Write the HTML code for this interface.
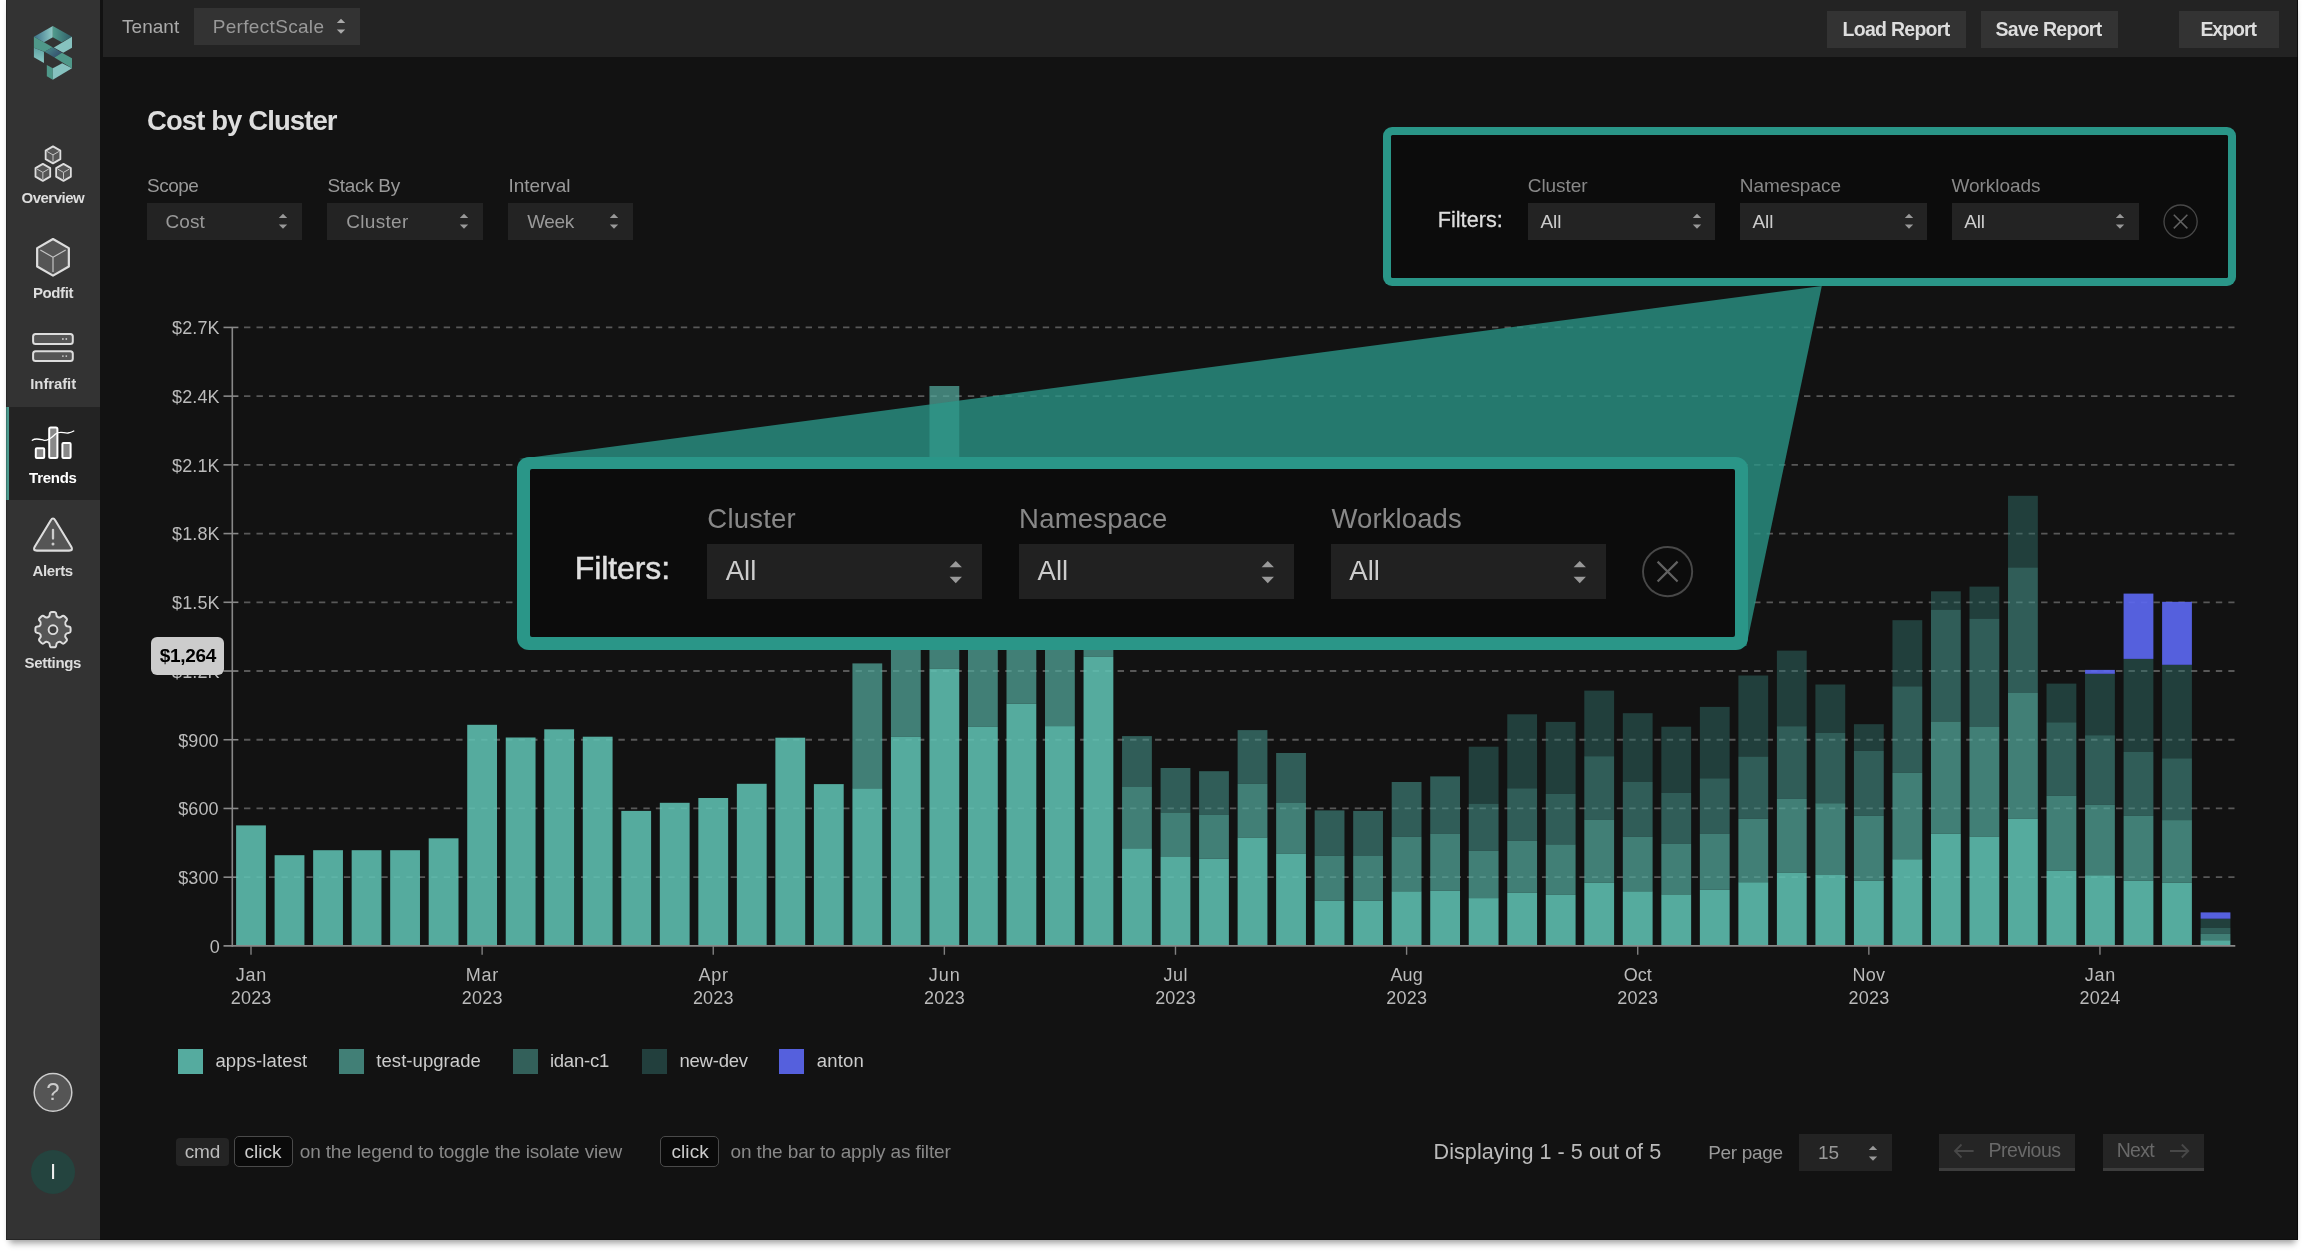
<!DOCTYPE html>
<html lang="en"><head><meta charset="utf-8"><title>Cost by Cluster</title>
<style>
html,body{margin:0;padding:0;background:#fff;}
body{width:2304px;height:1253px;position:relative;overflow:hidden;font-family:"Liberation Sans",sans-serif;}
.b{position:absolute;display:block;}
.t{position:absolute;white-space:pre;line-height:1;display:block;}
</style></head><body>
<div id="app" style="position:absolute;left:0;top:0;width:2304px;height:1253px;will-change:transform">
<div class="b" style="left:6px;top:0;width:2292px;height:1240px;background:#121212;box-shadow:0 7.5px 6px -3.5px rgba(0,0,0,.30),0 1px 5px rgba(0,0,0,.08);"></div>
<div class="b" style="left:6.00px;top:0.00px;width:94.00px;height:1240.00px;background:#333333;"></div>
<div class="b" style="left:103.00px;top:0.00px;width:2195.00px;height:57.40px;background:#232323;"></div>
<div class="b" style="left:6.00px;top:407.00px;width:94.00px;height:93.00px;background:#232323;"></div>
<div class="b" style="left:6.00px;top:407.00px;width:3.40px;height:93.00px;background:#4c998d;"></div>
<div class="b" style="left:6px;top:0;width:2292px;height:1240px;box-sizing:border-box;border-left:1.6px solid rgba(0,0,0,.22);border-right:1.5px solid rgba(0,0,0,.6);border-bottom:1.5px solid rgba(0,0,0,.28);pointer-events:none"></div>
<svg class="b" style="left:20px;top:15px" width="70" height="75" viewBox="0 0 1169 1253">
<defs>
<linearGradient id="lg1" x1="0" y1="0" x2="1" y2="0"><stop offset="0" stop-color="#3a6f86"/><stop offset="1" stop-color="#8fcbc6"/></linearGradient>
<linearGradient id="lg2" x1="0" y1="0" x2="1" y2="0"><stop offset="0" stop-color="#519c8d"/><stop offset="1" stop-color="#2e5c68"/></linearGradient>
<linearGradient id="lg3" x1="0" y1="0" x2="1" y2="0.6"><stop offset="0" stop-color="#4a8f8a"/><stop offset="1" stop-color="#35506f"/></linearGradient>
<linearGradient id="lg4" x1="0" y1="0" x2="0" y2="1"><stop offset="0" stop-color="#5fa3a3"/><stop offset="1" stop-color="#8cc9c5"/></linearGradient>
</defs>
<polygon points="232,365 548,185 548,370 400,457" fill="url(#lg1)"/>
<polygon points="548,185 868,365 695,455 548,370" fill="url(#lg2)"/>
<polygon points="868,365 868,548 722,632 565,543" fill="#86c2bf"/>
<polygon points="232,365 400,457 545,540 410,612 232,548" fill="#4f9889"/>
<polygon points="545,540 700,630 575,710 410,612" fill="url(#lg3)"/>
<polygon points="700,630 868,722 868,888 575,710" fill="#4f9889"/>
<polygon points="232,548 400,612 400,800 232,705" fill="url(#lg4)"/>
<polygon points="448,835 548,888 548,1082 448,1025" fill="#4f9889"/>
<polygon points="548,888 705,805 868,890 548,1082" fill="#86c2bf"/>
</svg>
<svg class="b" style="left:6px;top:130px" width="94" height="1110" viewBox="6 130 94 1110"><polygon points="53.00,146.40 60.36,150.65 60.36,159.15 53.00,163.40 45.64,159.15 45.64,150.65" fill="#555" stroke="#ddd" stroke-width="1.8" stroke-linejoin="round"/><path d="M53.00 154.90L53.00 161.70M53.00 154.90L58.89 151.50M53.00 154.90L47.11 151.50" stroke="#c4c4c4" stroke-width="1.0" fill="none"/><polygon points="42.85,163.90 50.21,168.15 50.21,176.65 42.85,180.90 35.49,176.65 35.49,168.15" fill="#555" stroke="#ddd" stroke-width="1.8" stroke-linejoin="round"/><path d="M42.85 172.40L42.85 179.20M42.85 172.40L48.74 169.00M42.85 172.40L36.96 169.00" stroke="#c4c4c4" stroke-width="1.0" fill="none"/><polygon points="63.50,163.90 70.86,168.15 70.86,176.65 63.50,180.90 56.14,176.65 56.14,168.15" fill="#555" stroke="#ddd" stroke-width="1.8" stroke-linejoin="round"/><path d="M63.50 172.40L63.50 179.20M63.50 172.40L69.39 169.00M63.50 172.40L57.61 169.00" stroke="#c4c4c4" stroke-width="1.0" fill="none"/><polygon points="53.00,239.00 68.85,248.15 68.85,266.45 53.00,275.60 37.15,266.45 37.15,248.15" fill="#555" stroke="#ddd" stroke-width="2.2" stroke-linejoin="round"/><path d="M53.00 257.30L53.00 271.94M53.00 257.30L65.68 249.98M53.00 257.30L40.32 249.98" stroke="#c4c4c4" stroke-width="1.2" fill="none"/><rect x="33.1" y="334.1" width="39.7" height="9.8" rx="2.5" fill="#555" stroke="#ddd" stroke-width="2"/><circle cx="62.9" cy="339.0" r="0.9" fill="#ccc"/><circle cx="66.3" cy="339.0" r="0.9" fill="#ccc"/><rect x="33.1" y="351.2" width="39.7" height="9.8" rx="2.5" fill="#555" stroke="#ddd" stroke-width="2"/><circle cx="62.9" cy="356.09999999999997" r="0.9" fill="#ccc"/><circle cx="66.3" cy="356.09999999999997" r="0.9" fill="#ccc"/><rect x="35.8" y="448.3" width="8.4" height="9.6" rx="1" fill="#888" stroke="#fff" stroke-width="2"/><rect x="49.2" y="427.5" width="8.2" height="30.4" rx="1.5" fill="#888" stroke="#fff" stroke-width="2"/><rect x="62.4" y="443" width="8.2" height="14.9" rx="1" fill="#888" stroke="#fff" stroke-width="2"/><path d="M32.3 440.3C36 437.5 40 439.5 44 440.3C49 441 52 437 55.5 434C60 430.5 64 433.5 68 433C70.5 432.7 72.5 431.8 73.8 431" stroke="#fff" stroke-width="1.3" fill="none" stroke-linecap="round"/><path d="M50.67 520.45Q53.00 516.60 55.33 520.45L71.27 546.75Q73.60 550.60 69.10 550.60L36.90 550.60Q32.40 550.60 34.73 546.75Z" fill="#555" stroke="#ddd" stroke-width="2.1" stroke-linejoin="round"/><path d="M53 529.8L53 538.6" stroke="#ccc" stroke-width="2.3" stroke-linecap="round"/><circle cx="53" cy="543.9" r="1.5" fill="#ccc"/><path d="M47.86 617.29Q49.83 616.48 49.78 614.29L49.78 614.29Q49.74 612.10 51.94 612.10L54.06 612.10Q56.26 612.10 56.22 614.29L56.22 614.29Q56.17 616.48 58.14 617.29L58.14 617.29Q60.11 618.10 61.62 616.53L61.62 616.53Q63.14 614.95 64.69 616.50L66.20 618.01Q67.75 619.56 66.17 621.08L66.17 621.08Q64.60 622.59 65.41 624.56L65.41 624.56Q66.22 626.53 68.41 626.48L68.41 626.48Q70.60 626.44 70.60 628.64L70.60 630.76Q70.60 632.96 68.41 632.92L68.41 632.92Q66.22 632.87 65.41 634.84L65.41 634.84Q64.60 636.81 66.17 638.32L66.17 638.32Q67.75 639.84 66.20 641.39L64.69 642.90Q63.14 644.45 61.62 642.87L61.62 642.87Q60.11 641.30 58.14 642.11L58.14 642.11Q56.17 642.92 56.22 645.11L56.22 645.11Q56.26 647.30 54.06 647.30L51.94 647.30Q49.74 647.30 49.78 645.11L49.78 645.11Q49.83 642.92 47.86 642.11L47.86 642.11Q45.89 641.30 44.38 642.87L44.38 642.87Q42.86 644.45 41.31 642.90L39.80 641.39Q38.25 639.84 39.83 638.32L39.83 638.32Q41.40 636.81 40.59 634.84L40.59 634.84Q39.78 632.87 37.59 632.92L37.59 632.92Q35.40 632.96 35.40 630.76L35.40 628.64Q35.40 626.44 37.59 626.48L37.59 626.48Q39.78 626.53 40.59 624.56L40.59 624.56Q41.40 622.59 39.83 621.08L39.83 621.08Q38.25 619.56 39.80 618.01L41.31 616.50Q42.86 614.95 44.38 616.53L44.38 616.53Q45.89 618.10 47.86 617.29Z" fill="#555" stroke="#ddd" stroke-width="2" stroke-linejoin="round"/><circle cx="53" cy="629.7" r="4.4" fill="#3c3c3c" stroke="#ddd" stroke-width="1.9"/><circle cx="53" cy="1092.4" r="18.8" fill="#555" stroke="#ccc" stroke-width="1.5"/><circle cx="53" cy="1172" r="22" fill="#24443f"/></svg>
<span class="t" style="left:21.50px;top:190.30px;font-size:15px;color:#ddd;font-weight:700;letter-spacing:-0.507px;">Overview</span>
<span class="t" style="left:32.90px;top:285.40px;font-size:15px;color:#ddd;font-weight:700;letter-spacing:-0.380px;">Podfit</span>
<span class="t" style="left:30.30px;top:376.20px;font-size:15px;color:#ddd;font-weight:700;letter-spacing:-0.118px;">Infrafit</span>
<span class="t" style="left:29.10px;top:469.50px;font-size:15px;color:#fff;font-weight:700;letter-spacing:-0.265px;">Trends</span>
<span class="t" style="left:32.60px;top:562.70px;font-size:15px;color:#ddd;font-weight:700;letter-spacing:-0.380px;">Alerts</span>
<span class="t" style="left:24.50px;top:655.30px;font-size:15px;color:#ddd;font-weight:700;letter-spacing:-0.318px;">Settings</span>
<span class="t" style="left:46.31px;top:1080.48px;font-size:24px;color:#ccc;letter-spacing:0.000px;">?</span>
<span class="t" style="left:49.94px;top:1161.38px;font-size:22px;color:#eee;letter-spacing:0.000px;">I</span>
<span class="t" style="left:122.00px;top:16.52px;font-size:19px;color:#aaa;letter-spacing:0.040px;">Tenant</span>
<div class="b" style="left:193.90px;top:7.80px;width:166.00px;height:37.00px;background:#333333;"></div>
<span class="t" style="left:212.70px;top:16.52px;font-size:19px;color:#999;letter-spacing:0.323px;">PerfectScale</span>
<svg class="b" style="left:332.50px;top:16.30px" width="16.00" height="20.00" viewBox="332.50 16.30 16.00 20.00"><path d="M336.30 23.30L344.70 23.30L340.50 19.00Z M336.30 29.80L344.70 29.80L340.50 34.10Z" fill="#aaa"/></svg>
<div class="b" style="left:1826.90px;top:11.00px;width:139.40px;height:37.20px;background:#333333;"></div>
<span class="t" style="left:1842.50px;top:19.79px;font-size:19.5px;color:#ddd;font-weight:700;letter-spacing:-0.717px;">Load Report</span>
<div class="b" style="left:1980.50px;top:11.00px;width:137.70px;height:37.20px;background:#333333;"></div>
<span class="t" style="left:1995.50px;top:19.79px;font-size:19.5px;color:#ddd;font-weight:700;letter-spacing:-0.705px;">Save Report</span>
<div class="b" style="left:2179.00px;top:11.00px;width:99.60px;height:37.20px;background:#333333;"></div>
<span class="t" style="left:2200.40px;top:19.79px;font-size:19.5px;color:#ddd;font-weight:700;letter-spacing:-1.030px;">Export</span>
<span class="t" style="left:147.00px;top:107.02px;font-size:27.5px;color:#ddd;font-weight:700;letter-spacing:-0.904px;">Cost by Cluster</span>
<span class="t" style="left:147.00px;top:176.22px;font-size:19px;color:#999;letter-spacing:-0.519px;">Scope</span>
<div class="b" style="left:147.00px;top:202.70px;width:155.30px;height:37.10px;background:#232323;"></div>
<span class="t" style="left:165.40px;top:211.52px;font-size:19px;color:#999;letter-spacing:0.125px;">Cost</span>
<svg class="b" style="left:275.10px;top:211.25px" width="16.00" height="20.00" viewBox="275.10 211.25 16.00 20.00"><path d="M278.90 218.25L287.30 218.25L283.10 213.95Z M278.90 224.75L287.30 224.75L283.10 229.05Z" fill="#999"/></svg>
<span class="t" style="left:327.40px;top:176.22px;font-size:19px;color:#999;letter-spacing:-0.314px;">Stack By</span>
<div class="b" style="left:327.40px;top:202.70px;width:155.40px;height:37.10px;background:#232323;"></div>
<span class="t" style="left:346.30px;top:211.52px;font-size:19px;color:#999;letter-spacing:0.296px;">Cluster</span>
<svg class="b" style="left:455.50px;top:211.25px" width="16.00" height="20.00" viewBox="455.50 211.25 16.00 20.00"><path d="M459.30 218.25L467.70 218.25L463.50 213.95Z M459.30 224.75L467.70 224.75L463.50 229.05Z" fill="#999"/></svg>
<span class="t" style="left:508.60px;top:176.22px;font-size:19px;color:#999;letter-spacing:-0.064px;">Interval</span>
<div class="b" style="left:508.10px;top:202.70px;width:124.90px;height:37.10px;background:#232323;"></div>
<span class="t" style="left:527.20px;top:211.52px;font-size:19px;color:#999;letter-spacing:-0.425px;">Week</span>
<svg class="b" style="left:605.50px;top:211.25px" width="16.00" height="20.00" viewBox="605.50 211.25 16.00 20.00"><path d="M609.30 218.25L617.70 218.25L613.50 213.95Z M609.30 224.75L617.70 224.75L613.50 229.05Z" fill="#999"/></svg>
<svg class="b" style="left:0;top:0" width="2304" height="1253" viewBox="0 0 2304 1253"><line x1="223.5" y1="877.18" x2="238.4" y2="877.18" stroke="#888" stroke-width="1.6"/><line x1="244" y1="877.18" x2="2234.5" y2="877.18" stroke="#585858" stroke-width="1.8" stroke-dasharray="6.4 6.08"/><line x1="223.5" y1="808.46" x2="238.4" y2="808.46" stroke="#888" stroke-width="1.6"/><line x1="244" y1="808.46" x2="2234.5" y2="808.46" stroke="#585858" stroke-width="1.8" stroke-dasharray="6.4 6.08"/><line x1="223.5" y1="739.74" x2="238.4" y2="739.74" stroke="#888" stroke-width="1.6"/><line x1="244" y1="739.74" x2="2234.5" y2="739.74" stroke="#585858" stroke-width="1.8" stroke-dasharray="6.4 6.08"/><line x1="223.5" y1="671.02" x2="238.4" y2="671.02" stroke="#888" stroke-width="1.6"/><line x1="244" y1="671.02" x2="2234.5" y2="671.02" stroke="#585858" stroke-width="1.8" stroke-dasharray="6.4 6.08"/><line x1="223.5" y1="602.30" x2="238.4" y2="602.30" stroke="#888" stroke-width="1.6"/><line x1="244" y1="602.30" x2="2234.5" y2="602.30" stroke="#585858" stroke-width="1.8" stroke-dasharray="6.4 6.08"/><line x1="223.5" y1="533.58" x2="238.4" y2="533.58" stroke="#888" stroke-width="1.6"/><line x1="244" y1="533.58" x2="2234.5" y2="533.58" stroke="#585858" stroke-width="1.8" stroke-dasharray="6.4 6.08"/><line x1="223.5" y1="464.86" x2="238.4" y2="464.86" stroke="#888" stroke-width="1.6"/><line x1="244" y1="464.86" x2="2234.5" y2="464.86" stroke="#585858" stroke-width="1.8" stroke-dasharray="6.4 6.08"/><line x1="223.5" y1="396.14" x2="238.4" y2="396.14" stroke="#888" stroke-width="1.6"/><line x1="244" y1="396.14" x2="2234.5" y2="396.14" stroke="#585858" stroke-width="1.8" stroke-dasharray="6.4 6.08"/><line x1="223.5" y1="327.42" x2="238.4" y2="327.42" stroke="#888" stroke-width="1.6"/><line x1="244" y1="327.42" x2="2234.5" y2="327.42" stroke="#585858" stroke-width="1.8" stroke-dasharray="6.4 6.08"/><g><rect x="236.10" y="825.40" width="29.8" height="120.50" fill="#5ec0b2" fill-opacity="0.88"/><rect x="274.62" y="855.20" width="29.8" height="90.70" fill="#5ec0b2" fill-opacity="0.88"/><rect x="313.14" y="850.20" width="29.8" height="95.70" fill="#5ec0b2" fill-opacity="0.88"/><rect x="351.66" y="850.20" width="29.8" height="95.70" fill="#5ec0b2" fill-opacity="0.88"/><rect x="390.18" y="850.20" width="29.8" height="95.70" fill="#5ec0b2" fill-opacity="0.88"/><rect x="428.70" y="838.30" width="29.8" height="107.60" fill="#5ec0b2" fill-opacity="0.88"/><rect x="467.22" y="724.80" width="29.8" height="221.10" fill="#5ec0b2" fill-opacity="0.88"/><rect x="505.74" y="737.50" width="29.8" height="208.40" fill="#5ec0b2" fill-opacity="0.88"/><rect x="544.26" y="729.30" width="29.8" height="216.60" fill="#5ec0b2" fill-opacity="0.88"/><rect x="582.78" y="736.70" width="29.8" height="209.20" fill="#5ec0b2" fill-opacity="0.88"/><rect x="621.30" y="810.90" width="29.8" height="135.00" fill="#5ec0b2" fill-opacity="0.88"/><rect x="659.82" y="802.80" width="29.8" height="143.10" fill="#5ec0b2" fill-opacity="0.88"/><rect x="698.34" y="798.00" width="29.8" height="147.90" fill="#5ec0b2" fill-opacity="0.88"/><rect x="736.86" y="783.80" width="29.8" height="162.10" fill="#5ec0b2" fill-opacity="0.88"/><rect x="775.38" y="737.70" width="29.8" height="208.20" fill="#5ec0b2" fill-opacity="0.88"/><rect x="813.90" y="784.10" width="29.8" height="161.80" fill="#5ec0b2" fill-opacity="0.88"/><rect x="852.42" y="788.30" width="29.8" height="157.60" fill="#5ec0b2" fill-opacity="0.88"/><rect x="852.42" y="663.40" width="29.8" height="124.90" fill="#53a99d" fill-opacity="0.72"/><rect x="890.94" y="736.90" width="29.8" height="209.00" fill="#5ec0b2" fill-opacity="0.88"/><rect x="890.94" y="600.00" width="29.8" height="136.90" fill="#53a99d" fill-opacity="0.72"/><rect x="929.46" y="668.50" width="29.8" height="277.40" fill="#5ec0b2" fill-opacity="0.88"/><rect x="929.46" y="386.00" width="29.8" height="282.50" fill="#53a99d" fill-opacity="0.72"/><rect x="967.98" y="726.90" width="29.8" height="219.00" fill="#5ec0b2" fill-opacity="0.88"/><rect x="967.98" y="560.00" width="29.8" height="166.90" fill="#53a99d" fill-opacity="0.72"/><rect x="1006.50" y="703.70" width="29.8" height="242.20" fill="#5ec0b2" fill-opacity="0.88"/><rect x="1006.50" y="580.00" width="29.8" height="123.70" fill="#53a99d" fill-opacity="0.72"/><rect x="1045.02" y="726.10" width="29.8" height="219.80" fill="#5ec0b2" fill-opacity="0.88"/><rect x="1045.02" y="600.00" width="29.8" height="126.10" fill="#53a99d" fill-opacity="0.72"/><rect x="1083.54" y="656.90" width="29.8" height="289.00" fill="#5ec0b2" fill-opacity="0.88"/><rect x="1083.54" y="640.00" width="29.8" height="16.90" fill="#53a99d" fill-opacity="0.72"/><rect x="1122.06" y="848.30" width="29.8" height="97.60" fill="#5ec0b2" fill-opacity="0.88"/><rect x="1122.06" y="787.00" width="29.8" height="61.30" fill="#53a99d" fill-opacity="0.72"/><rect x="1122.06" y="736.10" width="29.8" height="50.90" fill="#46958b" fill-opacity="0.58"/><rect x="1160.58" y="857.00" width="29.8" height="88.90" fill="#5ec0b2" fill-opacity="0.88"/><rect x="1160.58" y="812.50" width="29.8" height="44.50" fill="#53a99d" fill-opacity="0.72"/><rect x="1160.58" y="768.00" width="29.8" height="44.50" fill="#46958b" fill-opacity="0.58"/><rect x="1199.10" y="858.60" width="29.8" height="87.30" fill="#5ec0b2" fill-opacity="0.88"/><rect x="1199.10" y="814.60" width="29.8" height="44.00" fill="#53a99d" fill-opacity="0.72"/><rect x="1199.10" y="771.20" width="29.8" height="43.40" fill="#46958b" fill-opacity="0.58"/><rect x="1237.62" y="837.50" width="29.8" height="108.40" fill="#5ec0b2" fill-opacity="0.88"/><rect x="1237.62" y="783.80" width="29.8" height="53.70" fill="#53a99d" fill-opacity="0.72"/><rect x="1237.62" y="730.10" width="29.8" height="53.70" fill="#46958b" fill-opacity="0.58"/><rect x="1276.14" y="853.90" width="29.8" height="92.00" fill="#5ec0b2" fill-opacity="0.88"/><rect x="1276.14" y="803.00" width="29.8" height="50.90" fill="#53a99d" fill-opacity="0.72"/><rect x="1276.14" y="753.00" width="29.8" height="50.00" fill="#46958b" fill-opacity="0.58"/><rect x="1314.66" y="900.70" width="29.8" height="45.20" fill="#5ec0b2" fill-opacity="0.88"/><rect x="1314.66" y="855.70" width="29.8" height="45.00" fill="#53a99d" fill-opacity="0.72"/><rect x="1314.66" y="810.40" width="29.8" height="45.30" fill="#46958b" fill-opacity="0.58"/><rect x="1353.18" y="900.70" width="29.8" height="45.20" fill="#5ec0b2" fill-opacity="0.88"/><rect x="1353.18" y="856.00" width="29.8" height="44.70" fill="#53a99d" fill-opacity="0.72"/><rect x="1353.18" y="810.90" width="29.8" height="45.10" fill="#46958b" fill-opacity="0.58"/><rect x="1391.70" y="891.30" width="29.8" height="54.60" fill="#5ec0b2" fill-opacity="0.88"/><rect x="1391.70" y="836.70" width="29.8" height="54.60" fill="#53a99d" fill-opacity="0.72"/><rect x="1391.70" y="782.00" width="29.8" height="54.70" fill="#46958b" fill-opacity="0.58"/><rect x="1430.22" y="890.70" width="29.8" height="55.20" fill="#5ec0b2" fill-opacity="0.88"/><rect x="1430.22" y="833.60" width="29.8" height="57.10" fill="#53a99d" fill-opacity="0.72"/><rect x="1430.22" y="776.40" width="29.8" height="57.20" fill="#46958b" fill-opacity="0.58"/><rect x="1468.74" y="898.10" width="29.8" height="47.80" fill="#5ec0b2" fill-opacity="0.88"/><rect x="1468.74" y="850.70" width="29.8" height="47.40" fill="#53a99d" fill-opacity="0.72"/><rect x="1468.74" y="803.60" width="29.8" height="47.10" fill="#46958b" fill-opacity="0.58"/><rect x="1468.74" y="746.70" width="29.8" height="56.90" fill="#32726d" fill-opacity="0.47"/><rect x="1507.26" y="892.80" width="29.8" height="53.10" fill="#5ec0b2" fill-opacity="0.88"/><rect x="1507.26" y="840.70" width="29.8" height="52.10" fill="#53a99d" fill-opacity="0.72"/><rect x="1507.26" y="788.30" width="29.8" height="52.40" fill="#46958b" fill-opacity="0.58"/><rect x="1507.26" y="714.30" width="29.8" height="74.00" fill="#32726d" fill-opacity="0.47"/><rect x="1545.78" y="894.90" width="29.8" height="51.00" fill="#5ec0b2" fill-opacity="0.88"/><rect x="1545.78" y="844.40" width="29.8" height="50.50" fill="#53a99d" fill-opacity="0.72"/><rect x="1545.78" y="793.80" width="29.8" height="50.60" fill="#46958b" fill-opacity="0.58"/><rect x="1545.78" y="721.90" width="29.8" height="71.90" fill="#32726d" fill-opacity="0.47"/><rect x="1584.30" y="882.80" width="29.8" height="63.10" fill="#5ec0b2" fill-opacity="0.88"/><rect x="1584.30" y="819.60" width="29.8" height="63.20" fill="#53a99d" fill-opacity="0.72"/><rect x="1584.30" y="756.20" width="29.8" height="63.40" fill="#46958b" fill-opacity="0.58"/><rect x="1584.30" y="690.60" width="29.8" height="65.60" fill="#32726d" fill-opacity="0.47"/><rect x="1622.82" y="891.30" width="29.8" height="54.60" fill="#5ec0b2" fill-opacity="0.88"/><rect x="1622.82" y="836.70" width="29.8" height="54.60" fill="#53a99d" fill-opacity="0.72"/><rect x="1622.82" y="782.00" width="29.8" height="54.70" fill="#46958b" fill-opacity="0.58"/><rect x="1622.82" y="713.20" width="29.8" height="68.80" fill="#32726d" fill-opacity="0.47"/><rect x="1661.34" y="894.40" width="29.8" height="51.50" fill="#5ec0b2" fill-opacity="0.88"/><rect x="1661.34" y="843.60" width="29.8" height="50.80" fill="#53a99d" fill-opacity="0.72"/><rect x="1661.34" y="792.80" width="29.8" height="50.80" fill="#46958b" fill-opacity="0.58"/><rect x="1661.34" y="726.70" width="29.8" height="66.10" fill="#32726d" fill-opacity="0.47"/><rect x="1699.86" y="889.70" width="29.8" height="56.20" fill="#5ec0b2" fill-opacity="0.88"/><rect x="1699.86" y="833.60" width="29.8" height="56.10" fill="#53a99d" fill-opacity="0.72"/><rect x="1699.86" y="778.30" width="29.8" height="55.30" fill="#46958b" fill-opacity="0.58"/><rect x="1699.86" y="706.90" width="29.8" height="71.40" fill="#32726d" fill-opacity="0.47"/><rect x="1738.38" y="882.20" width="29.8" height="63.70" fill="#5ec0b2" fill-opacity="0.88"/><rect x="1738.38" y="818.80" width="29.8" height="63.40" fill="#53a99d" fill-opacity="0.72"/><rect x="1738.38" y="756.50" width="29.8" height="62.30" fill="#46958b" fill-opacity="0.58"/><rect x="1738.38" y="675.50" width="29.8" height="81.00" fill="#32726d" fill-opacity="0.47"/><rect x="1776.90" y="872.90" width="29.8" height="73.00" fill="#5ec0b2" fill-opacity="0.88"/><rect x="1776.90" y="798.90" width="29.8" height="74.00" fill="#53a99d" fill-opacity="0.72"/><rect x="1776.90" y="726.20" width="29.8" height="72.70" fill="#46958b" fill-opacity="0.58"/><rect x="1776.90" y="650.60" width="29.8" height="75.60" fill="#32726d" fill-opacity="0.47"/><rect x="1815.42" y="875.00" width="29.8" height="70.90" fill="#5ec0b2" fill-opacity="0.88"/><rect x="1815.42" y="803.20" width="29.8" height="71.80" fill="#53a99d" fill-opacity="0.72"/><rect x="1815.42" y="733.00" width="29.8" height="70.20" fill="#46958b" fill-opacity="0.58"/><rect x="1815.42" y="684.50" width="29.8" height="48.50" fill="#32726d" fill-opacity="0.47"/><rect x="1853.94" y="880.80" width="29.8" height="65.10" fill="#5ec0b2" fill-opacity="0.88"/><rect x="1853.94" y="815.80" width="29.8" height="65.00" fill="#53a99d" fill-opacity="0.72"/><rect x="1853.94" y="750.90" width="29.8" height="64.90" fill="#46958b" fill-opacity="0.58"/><rect x="1853.94" y="724.20" width="29.8" height="26.70" fill="#32726d" fill-opacity="0.47"/><rect x="1892.46" y="859.20" width="29.8" height="86.70" fill="#5ec0b2" fill-opacity="0.88"/><rect x="1892.46" y="772.80" width="29.8" height="86.40" fill="#53a99d" fill-opacity="0.72"/><rect x="1892.46" y="686.30" width="29.8" height="86.50" fill="#46958b" fill-opacity="0.58"/><rect x="1892.46" y="620.20" width="29.8" height="66.10" fill="#32726d" fill-opacity="0.47"/><rect x="1930.98" y="833.80" width="29.8" height="112.10" fill="#5ec0b2" fill-opacity="0.88"/><rect x="1930.98" y="721.50" width="29.8" height="112.30" fill="#53a99d" fill-opacity="0.72"/><rect x="1930.98" y="609.60" width="29.8" height="111.90" fill="#46958b" fill-opacity="0.58"/><rect x="1930.98" y="591.30" width="29.8" height="18.30" fill="#32726d" fill-opacity="0.47"/><rect x="1969.50" y="836.50" width="29.8" height="109.40" fill="#5ec0b2" fill-opacity="0.88"/><rect x="1969.50" y="727.00" width="29.8" height="109.50" fill="#53a99d" fill-opacity="0.72"/><rect x="1969.50" y="618.60" width="29.8" height="108.40" fill="#46958b" fill-opacity="0.58"/><rect x="1969.50" y="586.60" width="29.8" height="32.00" fill="#32726d" fill-opacity="0.47"/><rect x="2008.02" y="818.90" width="29.8" height="127.00" fill="#5ec0b2" fill-opacity="0.88"/><rect x="2008.02" y="693.00" width="29.8" height="125.90" fill="#53a99d" fill-opacity="0.72"/><rect x="2008.02" y="567.40" width="29.8" height="125.60" fill="#46958b" fill-opacity="0.58"/><rect x="2008.02" y="495.80" width="29.8" height="71.60" fill="#32726d" fill-opacity="0.47"/><rect x="2046.54" y="870.90" width="29.8" height="75.00" fill="#5ec0b2" fill-opacity="0.88"/><rect x="2046.54" y="795.80" width="29.8" height="75.10" fill="#53a99d" fill-opacity="0.72"/><rect x="2046.54" y="722.30" width="29.8" height="73.50" fill="#46958b" fill-opacity="0.58"/><rect x="2046.54" y="683.60" width="29.8" height="38.70" fill="#32726d" fill-opacity="0.47"/><rect x="2085.06" y="875.20" width="29.8" height="70.70" fill="#5ec0b2" fill-opacity="0.88"/><rect x="2085.06" y="804.80" width="29.8" height="70.40" fill="#53a99d" fill-opacity="0.72"/><rect x="2085.06" y="735.20" width="29.8" height="69.60" fill="#46958b" fill-opacity="0.58"/><rect x="2085.06" y="673.80" width="29.8" height="61.40" fill="#32726d" fill-opacity="0.47"/><rect x="2085.06" y="669.90" width="29.8" height="3.90" fill="#5b67ef" fill-opacity="0.92"/><rect x="2123.58" y="880.70" width="29.8" height="65.20" fill="#5ec0b2" fill-opacity="0.88"/><rect x="2123.58" y="815.80" width="29.8" height="64.90" fill="#53a99d" fill-opacity="0.72"/><rect x="2123.58" y="752.00" width="29.8" height="63.80" fill="#46958b" fill-opacity="0.58"/><rect x="2123.58" y="658.90" width="29.8" height="93.10" fill="#32726d" fill-opacity="0.47"/><rect x="2123.58" y="593.60" width="29.8" height="65.30" fill="#5b67ef" fill-opacity="0.92"/><rect x="2162.10" y="882.70" width="29.8" height="63.20" fill="#5ec0b2" fill-opacity="0.88"/><rect x="2162.10" y="820.10" width="29.8" height="62.60" fill="#53a99d" fill-opacity="0.72"/><rect x="2162.10" y="758.30" width="29.8" height="61.80" fill="#46958b" fill-opacity="0.58"/><rect x="2162.10" y="664.80" width="29.8" height="93.50" fill="#32726d" fill-opacity="0.47"/><rect x="2162.10" y="601.80" width="29.8" height="63.00" fill="#5b67ef" fill-opacity="0.92"/><rect x="2200.62" y="940.20" width="29.8" height="5.70" fill="#5ec0b2" fill-opacity="0.88"/><rect x="2200.62" y="933.90" width="29.8" height="6.30" fill="#53a99d" fill-opacity="0.72"/><rect x="2200.62" y="928.00" width="29.8" height="5.90" fill="#46958b" fill-opacity="0.58"/><rect x="2200.62" y="918.70" width="29.8" height="9.30" fill="#32726d" fill-opacity="0.47"/><rect x="2200.62" y="912.40" width="29.8" height="6.30" fill="#5b67ef" fill-opacity="0.92"/></g><line x1="232.3" y1="327.42" x2="232.3" y2="946.70" stroke="#888" stroke-width="1.6"/><line x1="223.5" y1="945.9" x2="2235.3" y2="945.9" stroke="#888" stroke-width="1.8"/><line x1="251.00" y1="945.9" x2="251.00" y2="954.8" stroke="#808080" stroke-width="1.4"/><line x1="482.12" y1="945.9" x2="482.12" y2="954.8" stroke="#808080" stroke-width="1.4"/><line x1="713.24" y1="945.9" x2="713.24" y2="954.8" stroke="#808080" stroke-width="1.4"/><line x1="944.36" y1="945.9" x2="944.36" y2="954.8" stroke="#808080" stroke-width="1.4"/><line x1="1175.48" y1="945.9" x2="1175.48" y2="954.8" stroke="#808080" stroke-width="1.4"/><line x1="1406.60" y1="945.9" x2="1406.60" y2="954.8" stroke="#808080" stroke-width="1.4"/><line x1="1637.72" y1="945.9" x2="1637.72" y2="954.8" stroke="#808080" stroke-width="1.4"/><line x1="1868.84" y1="945.9" x2="1868.84" y2="954.8" stroke="#808080" stroke-width="1.4"/><line x1="2099.96" y1="945.9" x2="2099.96" y2="954.8" stroke="#808080" stroke-width="1.4"/><polygon points="1821.8,286 1746.3,646 519,459" fill="#2a9688" fill-opacity="0.78"/></svg>
<span class="t" style="left:209.80px;top:937.66px;font-size:18px;color:#bbb;letter-spacing:0.000px;">0</span>
<span class="t" style="left:178.20px;top:868.94px;font-size:18px;color:#bbb;letter-spacing:0.100px;">$300</span>
<span class="t" style="left:178.20px;top:800.22px;font-size:18px;color:#bbb;letter-spacing:0.100px;">$600</span>
<span class="t" style="left:178.20px;top:731.50px;font-size:18px;color:#bbb;letter-spacing:0.100px;">$900</span>
<span class="t" style="left:172.10px;top:662.78px;font-size:18px;color:#bbb;letter-spacing:0.100px;">$1.2K</span>
<span class="t" style="left:172.10px;top:594.06px;font-size:18px;color:#bbb;letter-spacing:0.100px;">$1.5K</span>
<span class="t" style="left:172.10px;top:525.34px;font-size:18px;color:#bbb;letter-spacing:0.100px;">$1.8K</span>
<span class="t" style="left:172.10px;top:456.62px;font-size:18px;color:#bbb;letter-spacing:0.100px;">$2.1K</span>
<span class="t" style="left:172.10px;top:387.90px;font-size:18px;color:#bbb;letter-spacing:0.100px;">$2.4K</span>
<span class="t" style="left:172.10px;top:319.18px;font-size:18px;color:#bbb;letter-spacing:0.100px;">$2.7K</span>
<div class="b" style="left:151.30px;top:637.40px;width:73.00px;height:37.40px;background:#cccccc;border-radius:6px;"></div>
<span class="t" style="left:159.80px;top:646.02px;font-size:19px;color:#000;font-weight:700;letter-spacing:-0.305px;">$1,264</span>
<span class="t" style="left:235.70px;top:965.76px;font-size:18px;color:#bbb;letter-spacing:0.800px;">Jan</span>
<span class="t" style="left:230.65px;top:988.96px;font-size:18px;color:#bbb;letter-spacing:0.233px;">2023</span>
<span class="t" style="left:465.87px;top:965.76px;font-size:18px;color:#bbb;letter-spacing:0.750px;">Mar</span>
<span class="t" style="left:461.77px;top:988.96px;font-size:18px;color:#bbb;letter-spacing:0.233px;">2023</span>
<span class="t" style="left:698.49px;top:965.76px;font-size:18px;color:#bbb;letter-spacing:0.750px;">Apr</span>
<span class="t" style="left:692.89px;top:988.96px;font-size:18px;color:#bbb;letter-spacing:0.233px;">2023</span>
<span class="t" style="left:928.86px;top:965.76px;font-size:18px;color:#bbb;letter-spacing:1.000px;">Jun</span>
<span class="t" style="left:924.01px;top:988.96px;font-size:18px;color:#bbb;letter-spacing:0.233px;">2023</span>
<span class="t" style="left:1163.48px;top:965.76px;font-size:18px;color:#bbb;letter-spacing:0.500px;">Jul</span>
<span class="t" style="left:1155.13px;top:988.96px;font-size:18px;color:#bbb;letter-spacing:0.233px;">2023</span>
<span class="t" style="left:1390.55px;top:965.76px;font-size:18px;color:#bbb;letter-spacing:0.050px;">Aug</span>
<span class="t" style="left:1386.25px;top:988.96px;font-size:18px;color:#bbb;letter-spacing:0.233px;">2023</span>
<span class="t" style="left:1623.72px;top:965.76px;font-size:18px;color:#bbb;letter-spacing:0.000px;">Oct</span>
<span class="t" style="left:1617.37px;top:988.96px;font-size:18px;color:#bbb;letter-spacing:0.233px;">2023</span>
<span class="t" style="left:1852.59px;top:965.76px;font-size:18px;color:#bbb;letter-spacing:0.250px;">Nov</span>
<span class="t" style="left:1848.49px;top:988.96px;font-size:18px;color:#bbb;letter-spacing:0.233px;">2023</span>
<span class="t" style="left:2084.66px;top:965.76px;font-size:18px;color:#bbb;letter-spacing:0.800px;">Jan</span>
<span class="t" style="left:2079.61px;top:988.96px;font-size:18px;color:#bbb;letter-spacing:0.233px;">2024</span>
<div class="b" style="left:177.70px;top:1049.20px;width:25.00px;height:24.60px;background:#55ab9f;"></div>
<span class="t" style="left:215.40px;top:1052.34px;font-size:18.5px;color:#ccc;letter-spacing:0.130px;">apps-latest</span>
<div class="b" style="left:339.40px;top:1049.20px;width:25.00px;height:24.60px;background:#417f76;"></div>
<span class="t" style="left:376.30px;top:1052.34px;font-size:18.5px;color:#ccc;letter-spacing:0.057px;">test-upgrade</span>
<div class="b" style="left:512.60px;top:1049.20px;width:25.00px;height:24.60px;background:#33605a;"></div>
<span class="t" style="left:549.90px;top:1052.34px;font-size:18.5px;color:#ccc;letter-spacing:-0.221px;">idan-c1</span>
<div class="b" style="left:641.70px;top:1049.20px;width:25.00px;height:24.60px;background:#223f3d;"></div>
<span class="t" style="left:679.40px;top:1052.34px;font-size:18.5px;color:#ccc;letter-spacing:-0.212px;">new-dev</span>
<div class="b" style="left:779.40px;top:1049.20px;width:25.00px;height:24.60px;background:#5560dd;"></div>
<span class="t" style="left:816.70px;top:1052.34px;font-size:18.5px;color:#ccc;letter-spacing:0.212px;">anton</span>
<div class="b" style="left:176.20px;top:1137.80px;width:52.60px;height:28.00px;background:#242424;border-radius:4px;"></div>
<span class="t" style="left:184.80px;top:1142.32px;font-size:19px;color:#bbb;letter-spacing:-0.188px;">cmd</span>
<div class="b" style="left:234.00px;top:1136.30px;width:58.70px;height:30.70px;background:#0a0a0a;border-radius:5px;border:1.3px solid #4a4a4a;box-sizing:border-box;"></div>
<span class="t" style="left:244.50px;top:1142.32px;font-size:19px;color:#ccc;letter-spacing:0.044px;">click</span>
<span class="t" style="left:299.80px;top:1142.32px;font-size:19px;color:#888;letter-spacing:-0.157px;">on the legend to toggle the isolate view</span>
<div class="b" style="left:660.30px;top:1136.30px;width:58.70px;height:30.70px;background:#0a0a0a;border-radius:5px;border:1.3px solid #4a4a4a;box-sizing:border-box;"></div>
<span class="t" style="left:671.50px;top:1142.32px;font-size:19px;color:#ccc;letter-spacing:0.069px;">click</span>
<span class="t" style="left:730.50px;top:1142.32px;font-size:19px;color:#888;letter-spacing:-0.128px;">on the bar to apply as filter</span>
<span class="t" style="left:1433.60px;top:1141.42px;font-size:21.6px;color:#bbb;letter-spacing:0.030px;">Displaying 1 - 5 out of 5</span>
<span class="t" style="left:1708.30px;top:1142.92px;font-size:19px;color:#999;letter-spacing:-0.346px;">Per page</span>
<div class="b" style="left:1798.70px;top:1134.00px;width:93.60px;height:37.00px;background:#232323;"></div>
<span class="t" style="left:1818.00px;top:1142.92px;font-size:19px;color:#999;letter-spacing:-0.125px;">15</span>
<svg class="b" style="left:1865.00px;top:1142.50px" width="16.00" height="20.00" viewBox="1865.00 1142.50 16.00 20.00"><path d="M1868.80 1149.50L1877.20 1149.50L1873.00 1145.20Z M1868.80 1156.00L1877.20 1156.00L1873.00 1160.30Z" fill="#999"/></svg>
<div class="b" style="left:1939.00px;top:1134.00px;width:135.90px;height:37.00px;background:#252525;border-bottom:3.5px solid #3d3d3d;box-sizing:border-box;"></div>
<svg class="b" style="left:1952.4px;top:1141px" width="24.59999999999991" height="20" viewBox="1952.4 1141 24.59999999999991 20"><path d="M1974 1151L1955.4 1151M1961.9 1144.5L1955.4 1151L1961.9 1157.5" stroke="#484848" stroke-width="1.8" fill="none"/></svg>
<span class="t" style="left:1988.60px;top:1141.49px;font-size:19.5px;color:#696969;letter-spacing:-0.496px;">Previous</span>
<div class="b" style="left:2102.90px;top:1134.00px;width:101.10px;height:37.00px;background:#252525;border-bottom:3.5px solid #3d3d3d;box-sizing:border-box;"></div>
<span class="t" style="left:2116.70px;top:1141.49px;font-size:19.5px;color:#696969;letter-spacing:-0.675px;">Next</span>
<svg class="b" style="left:2166.7px;top:1141px" width="24.300000000000182" height="20" viewBox="2166.7 1141 24.300000000000182 20"><path d="M2169.7 1151L2188 1151M2181.5 1144.5L2188 1151L2181.5 1157.5" stroke="#484848" stroke-width="1.8" fill="none"/></svg>
<div class="b" style="left:1383.00px;top:127.00px;width:853.00px;height:159.30px;background:#2a9688;border-radius:9px;"></div>
<div class="b" style="left:1391.40px;top:135.30px;width:836.30px;height:142.70px;background:#0c0c0c;border-radius:1.5px;"></div>
<span class="t" style="left:1437.70px;top:208.92px;font-size:21.6px;color:#ddd;letter-spacing:0.043px;-webkit-text-stroke:0.3px #ddd;">Filters:</span>
<span class="t" style="left:1527.80px;top:176.22px;font-size:19px;color:#888;letter-spacing:-0.087px;">Cluster</span>
<div class="b" style="left:1527.80px;top:202.70px;width:187.20px;height:37.10px;background:#232323;"></div>
<span class="t" style="left:1540.60px;top:211.62px;font-size:19px;color:#ccc;letter-spacing:-0.162px;">All</span>
<svg class="b" style="left:1688.80px;top:211.25px" width="16.00" height="20.00" viewBox="1688.80 211.25 16.00 20.00"><path d="M1692.60 218.25L1701.00 218.25L1696.80 213.95Z M1692.60 224.75L1701.00 224.75L1696.80 229.05Z" fill="#999"/></svg>
<span class="t" style="left:1739.80px;top:176.22px;font-size:19px;color:#888;letter-spacing:-0.022px;">Namespace</span>
<div class="b" style="left:1739.80px;top:202.70px;width:187.00px;height:37.10px;background:#232323;"></div>
<span class="t" style="left:1752.60px;top:211.62px;font-size:19px;color:#ccc;letter-spacing:-0.162px;">All</span>
<svg class="b" style="left:1900.60px;top:211.25px" width="16.00" height="20.00" viewBox="1900.60 211.25 16.00 20.00"><path d="M1904.40 218.25L1912.80 218.25L1908.60 213.95Z M1904.40 224.75L1912.80 224.75L1908.60 229.05Z" fill="#999"/></svg>
<span class="t" style="left:1951.50px;top:176.22px;font-size:19px;color:#888;letter-spacing:-0.047px;">Workloads</span>
<div class="b" style="left:1951.50px;top:202.70px;width:187.00px;height:37.10px;background:#232323;"></div>
<span class="t" style="left:1964.30px;top:211.62px;font-size:19px;color:#ccc;letter-spacing:-0.163px;">All</span>
<svg class="b" style="left:2112.30px;top:211.25px" width="16.00" height="20.00" viewBox="2112.30 211.25 16.00 20.00"><path d="M2116.10 218.25L2124.50 218.25L2120.30 213.95Z M2116.10 224.75L2124.50 224.75L2120.30 229.05Z" fill="#999"/></svg>
<svg class="b" style="left:2162.00px;top:202.60px" width="37.20" height="37.20" viewBox="2162.00 202.60 37.20 37.20"><circle cx="2180.6" cy="221.2" r="16.6" fill="none" stroke="#484848" stroke-width="1.30"/><path d="M2173.80 214.40L2187.40 228.00M2187.40 214.40L2173.80 228.00" stroke="#626262" stroke-width="1.50" fill="none"/></svg>
<div class="b" style="left:517.40px;top:456.50px;width:1230.20px;height:193.10px;background:#2a9688;border-radius:12px;"></div>
<div class="b" style="left:530.00px;top:469.00px;width:1205.10px;height:168.00px;background:#0c0c0c;border-radius:2px;"></div>
<span class="t" style="left:574.70px;top:551.91px;font-size:32px;color:#e0e0e0;letter-spacing:-0.086px;-webkit-text-stroke:0.45px #e0e0e0;">Filters:</span>
<span class="t" style="left:707.30px;top:504.52px;font-size:27.5px;color:#888;letter-spacing:0.229px;">Cluster</span>
<div class="b" style="left:707.30px;top:544.20px;width:275.00px;height:54.60px;background:#212121;"></div>
<span class="t" style="left:725.70px;top:556.82px;font-size:27.5px;color:#ccc;letter-spacing:0.050px;">All</span>
<svg class="b" style="left:944.14px;top:556.80px" width="23.52" height="29.40" viewBox="944.14 556.80 23.52 29.40"><path d="M949.73 567.09L962.07 567.09L955.90 560.77Z M949.73 576.64L962.07 576.64L955.90 582.97Z" fill="#999"/></svg>
<span class="t" style="left:1019.10px;top:504.52px;font-size:27.5px;color:#888;letter-spacing:0.194px;">Namespace</span>
<div class="b" style="left:1019.10px;top:544.20px;width:275.00px;height:54.60px;background:#212121;"></div>
<span class="t" style="left:1037.50px;top:556.82px;font-size:27.5px;color:#ccc;letter-spacing:0.050px;">All</span>
<svg class="b" style="left:1255.94px;top:556.80px" width="23.52" height="29.40" viewBox="1255.94 556.80 23.52 29.40"><path d="M1261.53 567.09L1273.87 567.09L1267.70 560.77Z M1261.53 576.64L1273.87 576.64L1267.70 582.97Z" fill="#999"/></svg>
<span class="t" style="left:1331.40px;top:504.52px;font-size:27.5px;color:#888;letter-spacing:0.116px;">Workloads</span>
<div class="b" style="left:1330.80px;top:544.20px;width:275.10px;height:54.60px;background:#212121;"></div>
<span class="t" style="left:1349.20px;top:556.82px;font-size:27.5px;color:#ccc;letter-spacing:0.100px;">All</span>
<svg class="b" style="left:1567.54px;top:556.80px" width="23.52" height="29.40" viewBox="1567.54 556.80 23.52 29.40"><path d="M1573.13 567.09L1585.47 567.09L1579.30 560.77Z M1573.13 576.64L1585.47 576.64L1579.30 582.97Z" fill="#999"/></svg>
<svg class="b" style="left:1641.30px;top:544.90px" width="53.20" height="53.20" viewBox="1641.30 544.90 53.20 53.20"><circle cx="1667.9" cy="571.5" r="24.6" fill="none" stroke="#484848" stroke-width="1.91"/><path d="M1657.90 561.50L1677.90 581.50M1677.90 561.50L1657.90 581.50" stroke="#626262" stroke-width="2.21" fill="none"/></svg>
</div>
</body></html>
